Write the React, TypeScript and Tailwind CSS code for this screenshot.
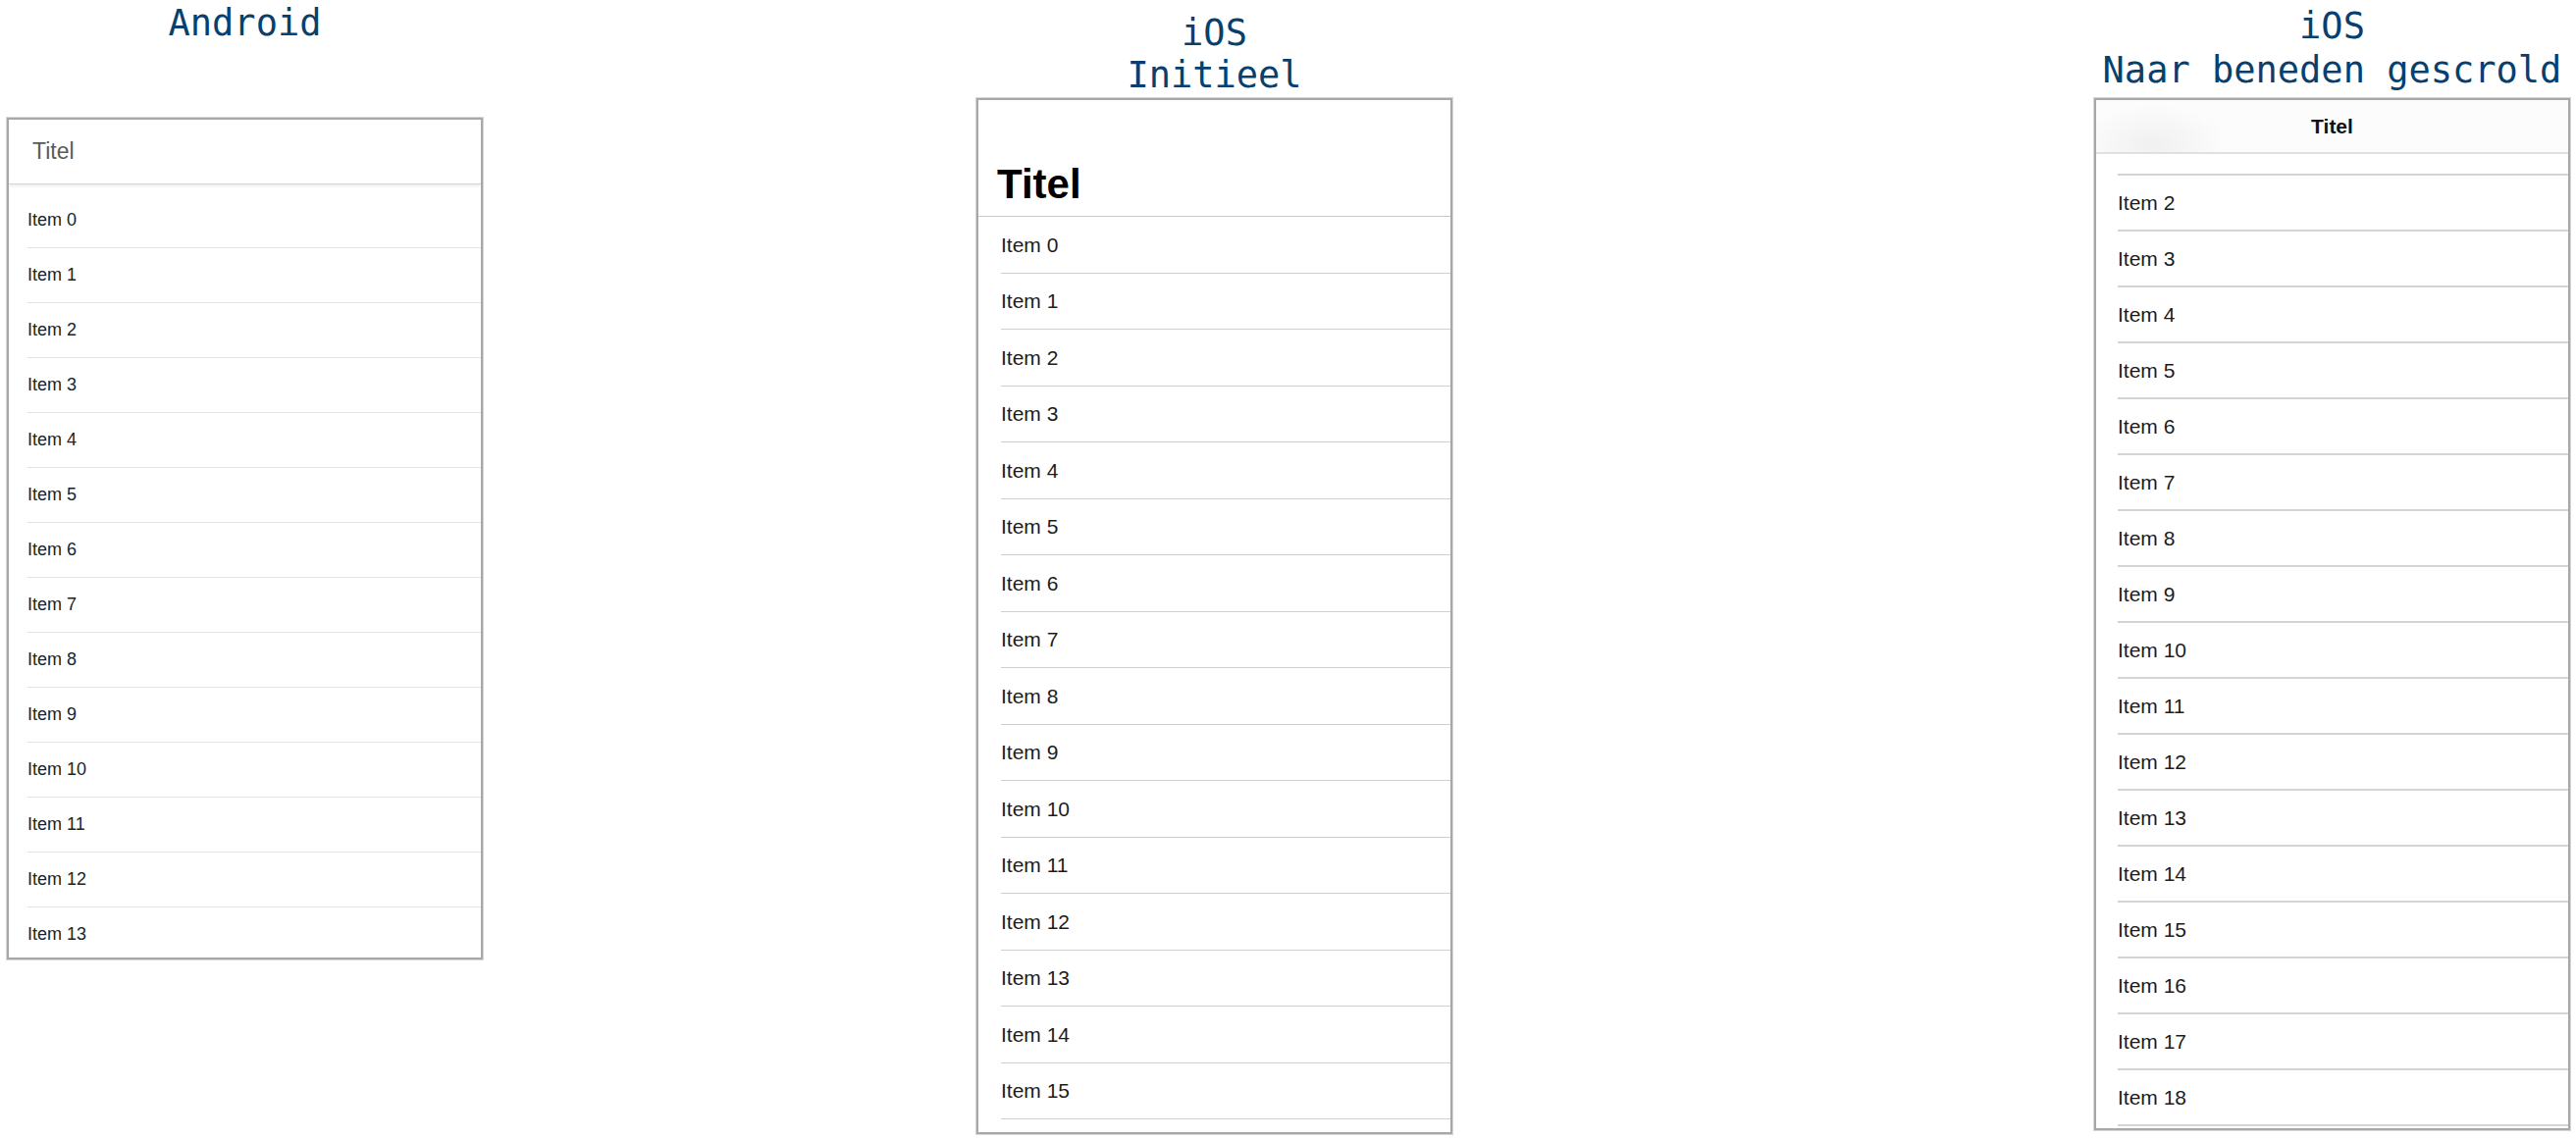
const android = Array.from({ length: 14 }, (_, i) => i);
const iosTop = Array.from({ length: 16 }, (_, i) => i);
const iosScrolled = Array.from({ length: 17 }, (_, i) => i + 2);

function Caption({ lines, className }: { lines: string[]; className: string }) {
    return (
        <div
            className={`text-center text-[37px] text-[#07406f] font-['DejaVu_Sans_Mono',monospace] ${className}`}
        >
            {lines.map((line) => (
                <div key={line}>{line}</div>
            ))}
        </div>
    );
}

export default function App() {
    return (
        <div className="flex h-[1160px] w-[2625px] items-start overflow-hidden bg-white font-['Liberation_Sans',Arial,sans-serif]">

            {/* ANDROID */}
            <div className="ml-[7px] flex w-[485px] flex-col pt-[2px]">
                <Caption lines={["Android"]} className="leading-[43px]" />
                <div className="mt-[75px] flex h-[858px] flex-col overflow-hidden border-2 border-[#a8a8a8] bg-white shadow-[0_0_0_1px_#d6d6d6]">
                    <div className="relative z-10 flex h-[66px] shrink-0 items-center border-b border-[#d4d4d4] pl-[24px] text-[23px] text-[#5a5a5a] shadow-[0_2px_3px_rgba(0,0,0,0.07)]">
                        Titel
                    </div>
                    <div className="flex flex-col pt-[9px]">
                        {android.map((i) => (
                            <div
                                key={i}
                                className="ml-[19px] flex h-[56px] shrink-0 items-center border-b border-[#e3e3e3] text-[18px] text-[#222]"
                            >
                                Item {i}
                            </div>
                        ))}
                    </div>
                </div>
            </div>

            {/* IOS - INITIAL */}
            <div className="ml-[503px] flex w-[485px] flex-col pt-[12px]">
                <Caption lines={["iOS", "Initieel"]} className="leading-[43px]" />
                <div className="mt-[2px] flex h-[1056px] flex-col overflow-hidden border-2 border-[#a8a8a8] bg-white shadow-[0_0_0_1px_#d6d6d6]">
                    <div className="flex h-[119px] shrink-0 items-end border-b border-[#c8c7cc] pb-[11px] pl-[19px] text-[42px] font-bold leading-[42px] text-black">
                        Titel
                    </div>
                    <div className="flex flex-col">
                        {iosTop.map((i) => (
                            <div
                                key={i}
                                className="ml-[23px] flex h-[57.5px] shrink-0 items-center border-b border-[#cfcfcf] text-[21px] text-[#1c1c1c]"
                            >
                                Item {i}
                            </div>
                        ))}
                    </div>
                </div>
            </div>

            {/* IOS - SCROLLED */}
            <div className="ml-[654px] flex w-[485px] flex-col pt-[4px]">
                <Caption lines={["iOS", "Naar beneden gescrold"]} className="leading-[45px]" />
                <div className="mt-[6px] flex h-[1052px] flex-col overflow-hidden border-2 border-[#a8a8a8] bg-white shadow-[0_0_0_1px_#d6d6d6]">
                    <div className="flex h-[55px] shrink-0 items-center justify-center border-b-2 border-[#e0e0e0] bg-[radial-gradient(ellipse_75px_42px_at_58px_46px,#f0f0f0,#fcfcfc)] text-[21px] font-bold text-[#111]">
                        Titel
                    </div>
                    <div className="flex flex-col">
                        <div className="ml-[22px] h-[22px] shrink-0 border-b-2 border-[#d4d4d6]" />
                        {iosScrolled.map((i) => (
                            <div
                                key={i}
                                className="ml-[22px] flex h-[57px] shrink-0 items-center border-b-2 border-[#d4d4d6] text-[21px] text-[#1c1c1c]"
                            >
                                Item {i}
                            </div>
                        ))}
                    </div>
                </div>
            </div>

        </div>
    );
}
